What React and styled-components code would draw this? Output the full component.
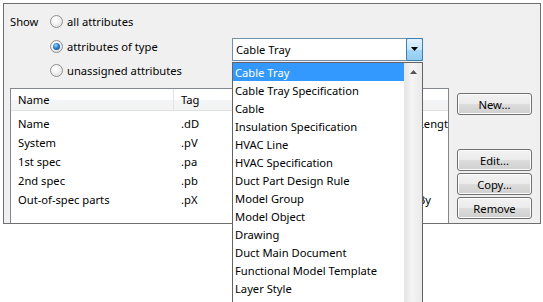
import styled, { createGlobalStyle } from "styled-components";

const GlobalStyle = createGlobalStyle`
  html, body { margin: 0; padding: 0; background: #ffffff; }
  body {
    font-family: "Noto Sans", "Open Sans", sans-serif;
    font-size: 11.2px;
    line-height: 15px;
    color: #000;
  }
`;

const types = [
  "Cable Tray",
  "Cable Tray Specification",
  "Cable",
  "Insulation Specification",
  "HVAC Line",
  "HVAC Specification",
  "Duct Part Design Rule",
  "Model Group",
  "Model Object",
  "Drawing",
  "Duct Main Document",
  "Functional Model Template",
  "Layer Style",
];

const rows = [
  { name: "Name", tag: ".dD", extra: "Length" },
  { name: "System", tag: ".pV", extra: "" },
  { name: "1st spec", tag: ".pa", extra: "" },
  { name: "2nd spec", tag: ".pb", extra: "" },
  { name: "Out-of-spec parts", tag: ".pX", extra: "By" },
];

export default function App() {
  return (
    <Page>
      <GlobalStyle />
      <Dialog>
        <ShowGrid>
          <ShowLabel>Show</ShowLabel>
          <RadioOption $row={1}>
            <Radio />
            <span>all attributes</span>
          </RadioOption>
          <RadioOption $row={2}>
            <Radio $checked />
            <span>attributes of type</span>
          </RadioOption>
          <RadioOption $row={3}>
            <Radio />
            <span>unassigned attributes</span>
          </RadioOption>
          <Combo>
            <ComboText>Cable Tray</ComboText>
            <ComboButton>
              <svg width="8" height="5" viewBox="0 0 8 5">
                <path d="M0 0h7L3.5 4z" fill="#000" />
              </svg>
            </ComboButton>
          </Combo>
        </ShowGrid>

        <Lower>
          <ListView>
            <HeaderRow>
              <HeaderCell $w={163}>Name</HeaderCell>
              <HeaderCell $w={237}>Tag</HeaderCell>
              <HeaderCell $w={80}></HeaderCell>
            </HeaderRow>
            <Body>
              {rows.map((r) => (
                <Row key={r.name}>
                  <Cell $w={163}>{r.name}</Cell>
                  <Cell $w={237}>{r.tag}</Cell>
                  <Cell $w={80}>{r.extra}</Cell>
                </Row>
              ))}
            </Body>
          </ListView>

          <Buttons>
            <Button>New...</Button>
            <Spacer />
            <Button>Edit...</Button>
            <Button>Copy...</Button>
            <Button>Remove</Button>
          </Buttons>
        </Lower>
      </Dialog>

      <Popup>
        <Items>
          {types.map((t, i) => (
            <Item key={t} $selected={i === 0}>{t}</Item>
          ))}
        </Items>
        <ScrollBar>
          <ScrollArrow>
            <svg width="7" height="4" viewBox="0 0 7 4">
              <path d="M0 4h7L3.5 0z" fill="#555" />
            </svg>
          </ScrollArrow>
        </ScrollBar>
      </Popup>
    </Page>
  );
}

const Page = styled.div`
  position: relative;
  width: 543px;
  height: 302px;
  overflow: hidden;
  background: #fff;
`;

const Dialog = styled.div`
  margin: 3px 0 0 3px;
  width: 536px;
  height: 219px;
  border: 1px solid #6e6e6e;
  background: #f0f0f0;
  overflow: hidden;
`;

const ShowGrid = styled.div`
  display: grid;
  grid-template-columns: 40px 182px 191px;
  grid-template-rows: 25px 24px 24px;
  padding: 5px 0 0 6px;
`;

const ShowLabel = styled.div`
  grid-column: 1;
  grid-row: 1;
  display: flex;
  align-items: center;
`;

const RadioOption = styled.div`
  grid-column: 2;
  grid-row: ${(p) => p.$row};
  display: flex;
  align-items: center;
  gap: 4px;
`;

const Radio = styled.span`
  position: relative;
  width: 11px;
  height: 11px;
  border-radius: 50%;
  border: 1px solid #8f8f8f;
  background: radial-gradient(circle at 40% 35%, #ffffff 0%, #f4f4f4 40%, #d6d6d6 100%);
  flex: none;
  &::after {
    content: "";
    display: ${(p) => (p.$checked ? "block" : "none")};
    position: absolute;
    left: 2px;
    top: 2px;
    width: 7px;
    height: 7px;
    border-radius: 50%;
    background: radial-gradient(circle at 40% 35%, #9fd3ff 0%, #2a7fd0 45%, #0e3f78 100%);
  }
`;

const Combo = styled.div`
  grid-column: 3;
  grid-row: 2;
  margin-top: 4px;
  height: 21px;
  display: flex;
  border: 1px solid #6f8fad;
  background: #fff;
`;

const ComboText = styled.div`
  flex: 1;
  display: flex;
  align-items: center;
  padding-left: 3px;
`;

const ComboButton = styled.div`
  width: 15px;
  display: flex;
  align-items: center;
  justify-content: center;
  border: 1px solid #3c7fb1;
  border-radius: 2px;
  margin: -1px -1px -1px 0;
  background: linear-gradient(#e4f3fc 0%, #c6e6fa 50%, #a5d7f5 51%, #92cdf1 100%);
`;

const Lower = styled.div`
  display: flex;
  align-items: flex-start;
  padding: 6px 0 0 6px;
  gap: 8px;
`;

const ListView = styled.div`
  width: 437px;
  height: 200px;
  border: 1px solid #828790;
  background: #fff;
  flex: none;
  overflow: hidden;
`;

const HeaderRow = styled.div`
  display: flex;
  height: 21px;
  background: linear-gradient(#ffffff 0%, #ffffff 50%, #f4f5f7 51%, #f3f3f3 100%);
  border-bottom: 1px solid #e0e0e0;
`;

const HeaderCell = styled.div`
  width: ${(p) => p.$w}px;
  flex: none;
  padding-left: 7px;
  box-sizing: border-box;
  display: flex;
  align-items: center;
  border-right: 1px solid #e3e3e3;
`;

const Body = styled.div`
  padding-top: 3px;
`;

const Row = styled.div`
  display: flex;
  height: 19px;
  align-items: center;
`;

const Cell = styled.div`
  width: ${(p) => p.$w}px;
  flex: none;
  padding-left: 7px;
  box-sizing: border-box;
  white-space: nowrap;
  overflow: hidden;
`;

const Buttons = styled.div`
  display: flex;
  flex-direction: column;
  gap: 2px;
  padding-top: 5px;
`;

const Spacer = styled.div`
  height: 30px;
`;

const Button = styled.div`
  width: 73px;
  height: 20px;
  border: 1px solid #707070;
  border-radius: 3px;
  background: linear-gradient(#f2f2f2 0%, #ebebeb 50%, #dddddd 51%, #cfcfcf 100%);
  box-shadow: inset 0 0 0 1px #fcfcfc;
  display: flex;
  align-items: center;
  justify-content: center;
`;

const Popup = styled.div`
  position: absolute;
  left: 232px;
  top: 62px;
  width: 189px;
  height: 250px;
  border: 1px solid #646464;
  background: #fff;
  display: flex;
`;

const Items = styled.div`
  flex: 1;
`;

const Item = styled.div`
  height: 18px;
  display: flex;
  align-items: center;
  padding-left: 2px;
  white-space: nowrap;
  background: ${(p) => (p.$selected ? "#3399ff" : "transparent")};
  color: ${(p) => (p.$selected ? "#fff" : "#000")};
`;

const ScrollBar = styled.div`
  width: 17px;
  flex: none;
  background: linear-gradient(90deg, #e6e6e6, #f4f4f4 40%, #eaeaea);
  border-left: 1px solid #e8e8e8;
`;

const ScrollArrow = styled.div`
  height: 17px;
  display: flex;
  align-items: center;
  justify-content: center;
`;
